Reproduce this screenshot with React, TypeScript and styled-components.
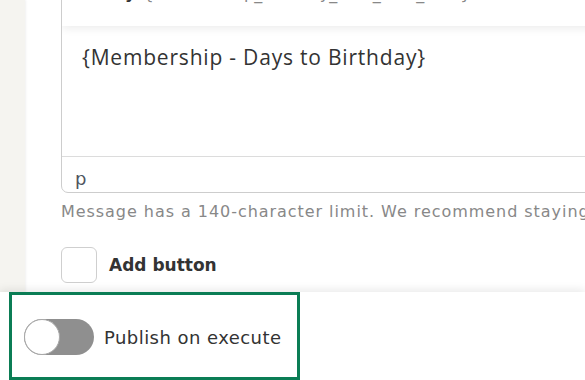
import React from "react";
import styled, { createGlobalStyle } from "styled-components";

const Global = createGlobalStyle`
  html, body { margin: 0; padding: 0; background: #fff; overflow: hidden; }
  #root { width: 585px; height: 380px; }
`;

const Page = styled.div`
  position: relative;
  display: flex;
  width: 585px;
  height: 380px;
  overflow: hidden;
  background: #fff;
  font-family: "DejaVu Sans", "Open Sans", sans-serif;
`;

const Strip = styled.div`
  flex: 0 0 25px;
  background: #f5f4f0;
  box-shadow: 1px 0 2px rgba(0, 0, 0, 0.06);
`;

const Main = styled.div`
  flex: 1;
  min-width: 0;
  overflow: hidden;
  padding-left: 36px;
`;

const Scrolled = styled.div`
  margin-top: -20px;
  width: 600px;
`;

const Editor = styled.div`
  border: 1px solid #cdcdcd;
  border-radius: 0 0 0 7px;
  overflow: hidden;
`;

const Toolbar = styled.div`
  position: relative;
  z-index: 1;
  height: 45px;
  box-sizing: border-box;
  display: flex;
  align-items: flex-end;
  gap: 8px;
  padding: 0 0 24px 40px;
  background: #fff;
  box-shadow: 0 3px 8px rgba(0, 0, 0, 0.07);
  overflow: hidden;
`;

const TokenKey = styled.span`
  font-size: 16px;
  font-weight: 700;
  color: #333;
  line-height: 16px;
`;

const TokenValue = styled.span`
  font-size: 16px;
  color: #888;
  line-height: 16px;
`;

const Content = styled.div`
  height: 130px;
  padding: 17px 20px 0 20px;
  box-sizing: border-box;
  font-family: "Open Sans", sans-serif;
  font-size: 21px;
  color: #333;
  letter-spacing: 0.8px;
`;

const StatusBar = styled.div`
  height: 36px;
  box-sizing: border-box;
  border-top: 1px solid #dcdcdc;
  padding: 0 0 0 13px;
  display: flex;
  align-items: flex-end;
  font-size: 18px;
  line-height: 26px;
  color: #4f5560;
`;

const Help = styled.div`
  margin-top: 9px;
  font-size: 16px;
  color: #888;
  white-space: nowrap;
  letter-spacing: 0.95px;
`;

const CheckRow = styled.div`
  margin-top: 26px;
  display: flex;
  align-items: center;
  gap: 12px;
`;

const CheckBox = styled.div`
  width: 34px;
  height: 34px;
  border: 1px solid #cfcfcf;
  border-radius: 6px;
  background: #fff;
`;

const CheckLabel = styled.span`
  font-size: 17px;
  font-weight: 600;
  color: #333;
`;

const Footer = styled.div`
  position: absolute;
  left: 0;
  right: 0;
  bottom: 0;
  height: 88px;
  background: #fff;
  box-shadow: 0 -3px 8px rgba(0, 0, 0, 0.08);
  padding-left: 9px;
`;

const FocusBox = styled.div`
  width: 291px;
  height: 88px;
  box-sizing: border-box;
  border: 3px solid #0b7d55;
  display: flex;
  align-items: center;
  gap: 10px;
  padding-left: 12px;
  padding-top: 2px;
`;

const Toggle = styled.div<{ $on: boolean }>`
  position: relative;
  width: 70px;
  height: 36px;
  border-radius: 18px;
  background: ${(p) => (p.$on ? "#0b7d55" : "#8f8f8f")};
  box-sizing: border-box;
`;

const Knob = styled.div`
  position: absolute;
  left: 0;
  top: 0;
  width: 36px;
  height: 36px;
  border-radius: 50%;
  background: #fff;
  border: 1px solid #a8a8a8;
  box-sizing: border-box;
`;

const ToggleLabel = styled.span`
  font-size: 18px;
  font-weight: 500;
  color: #333;
  letter-spacing: 0.45px;
`;

export default function App() {
  return (
    <>
      <Global />
      <Page>
        <Strip />
        <Main>
          <Scrolled>
            <Editor>
              <Toolbar>
                <TokenKey>Key</TokenKey>
                <TokenValue>{"{membership_birthday_until_next_date}"}</TokenValue>
              </Toolbar>
              <Content>{"{Membership - Days to Birthday}"}</Content>
              <StatusBar>p</StatusBar>
            </Editor>
            <Help>Message has a 140-character limit. We recommend staying within it to avoid different rendering</Help>
            <CheckRow>
              <CheckBox />
              <CheckLabel>Add button</CheckLabel>
            </CheckRow>
          </Scrolled>
        </Main>
        <Footer>
          <FocusBox>
            <Toggle $on={false}>
              <Knob />
            </Toggle>
            <ToggleLabel>Publish on execute</ToggleLabel>
          </FocusBox>
        </Footer>
      </Page>
    </>
  );
}
